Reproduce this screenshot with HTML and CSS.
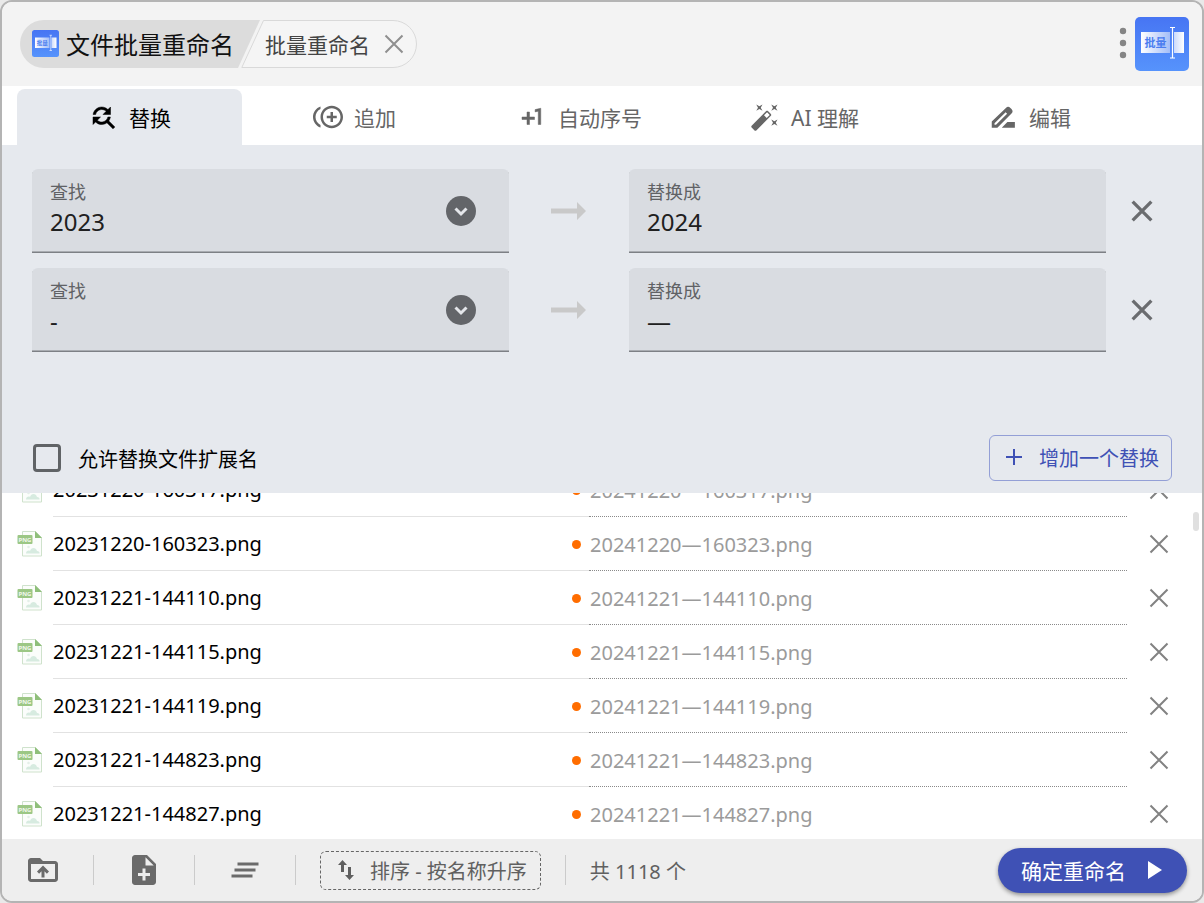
FILE: index.html
```
<!DOCTYPE html>
<html lang="zh-CN">
<head>
<meta charset="utf-8">
<title>文件批量重命名</title>
<link rel="stylesheet" href="styles.css">
</head>
<body>
<svg class="defs" aria-hidden="true">
  <defs>
    <linearGradient id="logo-bg" x1="0" y1="0" x2="0" y2="1"><stop offset="0" stop-color="#4775f3"/><stop offset="1" stop-color="#5693fc"/></linearGradient>
    <linearGradient id="logo-box" x1="0" y1="0" x2="1" y2="0"><stop offset="0" stop-color="#ffffff"/><stop offset="1" stop-color="#a3bdf8"/></linearGradient>
    <linearGradient id="logo-end" x1="0" y1="0" x2="1" y2="0"><stop offset="0" stop-color="#ccdafb"/><stop offset="1" stop-color="#ffffff"/></linearGradient>
    <symbol id="logo" viewBox="0 0 54 54">
      <rect width="54" height="54" rx="5" fill="url(#logo-bg)"/>
      <rect x="6" y="15" width="29" height="21" fill="url(#logo-box)"/>
      <rect x="39" y="15" width="10" height="21" fill="url(#logo-end)"/>
      <path d="M35 10.500h5M35 41h5M37.500 10.500V41" stroke="#fff" stroke-width="1.200" fill="none"/>
      <text x="9.500" y="30" class="logo-text">批量</text>
    </symbol>
    <symbol id="png" viewBox="0 0 26 28">
      <path d="M5.500 1.500h13l6 6v18.500h-19z" fill="#fbfdfb" stroke="#cfe2cc" stroke-width="1"/>
      <path d="M18 1l7 7h-7z" fill="#8fbf7a"/>
      <path d="M9 23.500c0-3 3-3.500 4-2.500 1-4 6-4 7 0 2 0 3 1.500 2.500 2.500z" fill="#d7ebe0"/>
      <circle cx="11.500" cy="17" r="1.300" fill="#e4f0e8"/>
      <rect x="0.500" y="5" width="15" height="9" rx="1" fill="#9cc785"/>
      <text x="1.500" y="12" class="png-text">PNG</text>
    </symbol>
    <symbol id="x" viewBox="0 0 20 20"><path d="M1.500 1.500l17 17M18.500 1.500l-17 17" stroke="currentColor" fill="none"/></symbol>
  </defs>
</svg>

<div class="window">
  <header class="header">
    <nav class="crumbs">
      <div class="crumb-app"><svg class="logo-small"><use href="#logo"/></svg><span>文件批量重命名</span></div>
      <div class="crumb-task">
        <svg class="crumb-outline" viewBox="0 0 176 48" aria-hidden="true"><path d="M22.500.5H152a23.500 23.500 0 0 1 0 47H.8z" fill="#f5f5f5" stroke="#d9d9d9"/></svg>
        <span>批量重命名</span>
        <button class="icon-button crumb-close" aria-label="关闭"><svg class="x x-thin"><use href="#x"/></svg></button>
      </div>
    </nav>
    <div class="header-end">
      <button class="icon-button kebab" aria-label="更多"><svg viewBox="0 0 8 32" width="8" height="32"><g fill="#858585"><circle cx="4" cy="4" r="3.200"/><circle cx="4" cy="16" r="3.200"/><circle cx="4" cy="28" r="3.200"/></g></svg></button>
      <svg class="logo-large"><use href="#logo"/></svg>
    </div>
  </header>

  <div class="tabs" role="tablist">
    <button class="tab active" role="tab" aria-selected="true"><svg viewBox="0 0 24 24"><path d="M11 6c1.380 0 2.630.56 3.540 1.460L12 10h6V4l-2.050 2.050C14.680 4.780 12.930 4 11 4c-3.530 0-6.430 2.610-6.920 6H6.100c.46-2.280 2.480-4 4.900-4zm5.640 9.140c.66-.9 1.120-1.970 1.280-3.140H15.900c-.46 2.280-2.480 4-4.900 4-1.380 0-2.630-.56-3.540-1.460L10 12H4v6l2.050-2.050C7.320 17.220 9.070 18 11 18c1.550 0 2.980-.51 4.140-1.360L20 21.490 21.490 20l-4.850-4.860z" stroke="currentColor" stroke-width=".4"/></svg>替换</button>
    <button class="tab" role="tab"><svg viewBox="0 0 24 24"><path d="M16 8h-2v3h-3v2h3v3h2v-3h3v-2h-3zM2 12c0-2.790 1.640-5.200 4.010-6.320V3.520C2.520 4.760 0 8.090 0 12s2.520 7.240 6.010 8.480v-2.160C3.640 17.200 2 14.790 2 12zm13-9c-4.960 0-9 4.040-9 9s4.040 9 9 9 9-4.040 9-9-4.040-9-9-9zm0 16c-3.860 0-7-3.140-7-7s3.140-7 7-7 7 3.140 7 7-3.140 7-7 7z"/></svg>追加</button>
    <button class="tab" role="tab"><svg viewBox="0 0 24 24"><path d="M10 8H8v4H4v2h4v4h2v-4h4v-2h-4zm4.500-1.920V7.900l2.500-.5V18h2V5z" stroke="currentColor" stroke-width=".4"/></svg>自动序号</button>
    <button class="tab" role="tab"><svg viewBox="0 0 24 24"><path d="M7.500 5.600L5 7l1.400-2.500L5 2l2.500 1.400L10 2 8.600 4.500 10 7zM19.500 15.400L22 14l-1.400 2.500L22 19l-2.500-1.400L17 19l1.400-2.500L17 14zM22 2l-1.400 2.500L22 7l-2.500-1.400L17 7l1.400-2.500L17 2l2.500 1.400zM13.340 12.780l2.440-2.440-2.120-2.120-2.440 2.440zM14.370 7.290l2.340 2.340c.39.37.39 1.020 0 1.410L5.040 22.710c-.39.39-1.040.39-1.410 0l-2.340-2.340c-.39-.37-.39-1.020 0-1.410L12.960 7.290c.39-.39 1.040-.39 1.410 0z"/></svg>AI 理解</button>
    <button class="tab" role="tab"><svg viewBox="0 0 24 24"><path fill-rule="evenodd" d="M3 15.500V20.500h4.500L18.800 9.200a2.600 2.600 0 0 0 0-3.600l-.9-.9a2.600 2.600 0 0 0-3.600 0zM6.400 18.200H5.200V17l8.900-8.900 1.200 1.200zM15.500 16l-4.500 4.500h10.500v-4.500z"/></svg>编辑</button>
  </div>

  <section class="panel">
    <div class="rules">
      <div class="rule">
        <div class="field"><label for="find-1">查找</label><input id="find-1" type="text" value="2023">
          <button class="icon-button history" aria-label="历史"><svg viewBox="0 0 30 30" width="30" height="30"><circle cx="15" cy="15" r="15" fill="#636569"/><path d="M9.500 12.500l5.500 5.500 5.500-5.500" fill="none" stroke="#e4e6ea" stroke-width="3"/></svg></button></div>
        <svg class="arrow" viewBox="0 0 36 18"><path d="M0 6.500h26V0l9 9-9 9v-6.500H0z"/></svg>
        <div class="field"><label for="to-1">替换成</label><input id="to-1" type="text" value="2024"></div>
        <button class="icon-button" aria-label="删除规则"><svg class="x x-bold"><use href="#x"/></svg></button>
      </div>
      <div class="rule">
        <div class="field"><label for="find-2">查找</label><input id="find-2" type="text" value="-">
          <button class="icon-button history" aria-label="历史"><svg viewBox="0 0 30 30" width="30" height="30"><circle cx="15" cy="15" r="15" fill="#636569"/><path d="M9.500 12.500l5.500 5.500 5.500-5.500" fill="none" stroke="#e4e6ea" stroke-width="3"/></svg></button></div>
        <svg class="arrow" viewBox="0 0 36 18"><path d="M0 6.500h26V0l9 9-9 9v-6.500H0z"/></svg>
        <div class="field"><label for="to-2">替换成</label><input id="to-2" type="text" value="—"></div>
        <button class="icon-button" aria-label="删除规则"><svg class="x x-bold"><use href="#x"/></svg></button>
      </div>
    </div>
    <div class="panel-actions">
      <label class="check"><input type="checkbox">允许替换文件扩展名</label>
      <button class="add"><svg viewBox="0 0 18 18" width="18" height="18"><path d="M9 1v16M1 9h16" stroke="currentColor" stroke-width="2"/></svg>增加一个替换</button>
    </div>
  </section>

  <main class="files">
    <ul class="file-list" id="file-list">
      <li class="file"><svg class="png"><use href="#png"/></svg><span class="name">20231220-160317.png</span><input class="new-name" aria-label="新文件名" value="20241220—160317.png"><button class="icon-button" aria-label="移除"><svg class="x x-mid"><use href="#x"/></svg></button></li>
      <li class="file"><svg class="png"><use href="#png"/></svg><span class="name">20231220-160323.png</span><input class="new-name" aria-label="新文件名" value="20241220—160323.png"><button class="icon-button" aria-label="移除"><svg class="x x-mid"><use href="#x"/></svg></button></li>
      <li class="file"><svg class="png"><use href="#png"/></svg><span class="name">20231221-144110.png</span><input class="new-name" aria-label="新文件名" value="20241221—144110.png"><button class="icon-button" aria-label="移除"><svg class="x x-mid"><use href="#x"/></svg></button></li>
      <li class="file"><svg class="png"><use href="#png"/></svg><span class="name">20231221-144115.png</span><input class="new-name" aria-label="新文件名" value="20241221—144115.png"><button class="icon-button" aria-label="移除"><svg class="x x-mid"><use href="#x"/></svg></button></li>
      <li class="file"><svg class="png"><use href="#png"/></svg><span class="name">20231221-144119.png</span><input class="new-name" aria-label="新文件名" value="20241221—144119.png"><button class="icon-button" aria-label="移除"><svg class="x x-mid"><use href="#x"/></svg></button></li>
      <li class="file"><svg class="png"><use href="#png"/></svg><span class="name">20231221-144823.png</span><input class="new-name" aria-label="新文件名" value="20241221—144823.png"><button class="icon-button" aria-label="移除"><svg class="x x-mid"><use href="#x"/></svg></button></li>
      <li class="file"><svg class="png"><use href="#png"/></svg><span class="name">20231221-144827.png</span><input class="new-name" aria-label="新文件名" value="20241221—144827.png"><button class="icon-button" aria-label="移除"><svg class="x x-mid"><use href="#x"/></svg></button></li>
    </ul>
    <div class="thumb"></div>
  </main>

  <footer class="footer">
    <div class="tools">
      <button class="icon-button" aria-label="添加文件夹"><svg class="tool" viewBox="0 0 24 24"><path d="M20 6h-8l-2-2H4c-1.100 0-1.990.9-1.990 2L2 18c0 1.100.9 2 2 2h16c1.100 0 2-.9 2-2V8c0-1.100-.9-2-2-2zm0 12H4V8h16zM9.410 14.420L11 12.840V17h2v-4.160l1.590 1.590L16 13.010 12.010 9 8 13.010z"/></svg></button>
      <span class="divider"></span>
      <button class="icon-button" aria-label="添加文件"><svg class="tool" viewBox="0 0 24 24"><path d="M14 2H6c-1.100 0-1.990.9-1.990 2L4 20c0 1.100.89 2 1.990 2H18c1.100 0 2-.9 2-2V8zm2 14h-3v3h-2v-3H8v-2h3v-3h2v3h3zm-3-7V3.500L18.500 9z"/></svg></button>
      <span class="divider"></span>
      <button class="icon-button" aria-label="清空"><svg class="tool" viewBox="0 0 24 24"><path d="M5 13h14v-2H5v2zm-2 4h14v-2H3v2zM7 7v2h14V7H7z"/></svg></button>
      <span class="divider"></span>
    </div>
    <button class="sort"><svg viewBox="0 0 18 22" width="18" height="22"><path d="M4 13V6H1l4.500-5L10 6H7v7zM11 8v8H8l4.500 5 4.500-5h-3V8z" fill="#5f5f5f"/></svg>排序 - 按名称升序</button>
    <span class="divider"></span>
    <span class="count">共 1118 个</span>
    <button class="confirm">确定重命名<svg viewBox="0 0 14 18" width="14" height="18"><path d="M0 0l14 9-14 9z" fill="#fff"/></svg></button>
  </footer>
</div>
<script src="main.js"></script>
</body>
</html>
```

FILE: styles.css
```
* { box-sizing: border-box; }

body {
  margin: 0;
  background: #e9e9e9;
  color: #111;
  font-family: "Noto Sans", "Noto Sans CJK SC", sans-serif;
  font-size: 20px;
  font-weight: 400;
}

button, input { font: inherit; color: inherit; }
button { padding: 0; border: 0; background: none; cursor: pointer; white-space: nowrap; }
svg { display: block; flex: none; }

.defs { position: absolute; width: 0; height: 0; }

.window {
  display: flex;
  flex-direction: column;
  height: 100vh;
  border: 2px solid #b4b4b4;
  border-radius: 12px;
  background: #fff;
  overflow: hidden;
}

.icon-button { display: flex; align-items: center; justify-content: center; color: #6a6c6f; }
.x { width: 20px; height: 20px; stroke-width: 2px; }
.x-thin { color: #8f8f8f; }
.x-mid { color: #828282; }
.x-bold { width: 22px; height: 22px; stroke-width: 3px; }

/* Header */
.header {
  display: flex;
  align-items: center;
  justify-content: space-between;
  height: 84px;
  flex: none;
  padding: 0 13px 0 18px;
  background: #f3f3f3;
}
.crumbs { display: flex; }
.crumb-app {
  display: flex;
  align-items: center;
  gap: 7px;
  height: 48px;
  padding: 0 26px 2px 12px;
  border-radius: 24px 0 0 24px;
  background: #dcdcdc;
  clip-path: polygon(0 0, 100% 0, calc(100% - 22px) 100%, 0 100%);
  font-size: 24px;
}
.logo-small { width: 27px; height: 27px; }
.crumb-task {
  position: relative;
  display: flex;
  align-items: center;
  gap: 14px;
  width: 176px;
  height: 48px;
  margin-left: -19px;
  padding: 0 0 1px 24px;
  color: #444;
  font-size: 21px;
}
.crumb-task span, .crumb-close { position: relative; }
.crumb-outline { position: absolute; left: 0; top: 0; width: 176px; height: 48px; }
.header-end { display: flex; align-items: center; gap: 8px; }
.kebab { padding-bottom: 2px; }
.logo-large { width: 54px; height: 54px; }
.logo-text { font-size: 11px; font-weight: 700; fill: #4a7df0; }
.png-text { font-size: 6px; font-weight: 700; fill: #f2f8ef; }

/* Tabs */
.tabs { display: flex; flex: none; padding: 3px 60px 0 15px; background: #fff; }
.tab {
  display: flex;
  flex: 1 1 0;
  align-items: center;
  justify-content: center;
  gap: 11px;
  height: 56px;
  border-radius: 8px 8px 0 0;
  color: #666;
  font-size: 21px;
}
.tab svg { width: 30px; height: 30px; fill: currentColor; }
.tab.active { background: #e6e9ee; color: #000; }

/* Replace rules */
.panel { flex: none; padding: 24px 0 12px 30px; background: #e6e9ee; }
.rules { display: grid; align-content: start; gap: 15px; min-height: 266px; }
.rule { display: grid; grid-template-columns: 1fr 120px 1fr 72px; padding-right: 24px; }
.field {
  position: relative;
  display: flex;
  flex-direction: column;
  height: 84px;
  padding: 12px 18px 0;
  border-radius: 6px 6px 0 0;
  background: #d9dce1;
  box-shadow: inset 0 -1px #7d8085, inset 0 -2px #a9acb1;
}
.field label { color: #606265; font-size: 18px; line-height: 22px; }
.field input {
  width: 100%;
  height: 32px;
  margin-top: 3px;
  padding: 0;
  border: 0;
  outline: 0;
  background: none;
  color: #202020;
  font-size: 24px;
  line-height: 32px;
}
.history { position: absolute; right: 33px; top: 27px; }
.arrow { place-self: center; width: 36px; height: 18px; fill: #c9c9c9; }
.panel-actions { display: flex; align-items: center; justify-content: space-between; padding-right: 30px; }
.check { display: flex; align-items: center; gap: 17px; color: #000; }
.check input {
  appearance: none;
  width: 28px;
  height: 28px;
  margin: 0 0 0 1px;
  border: 3px solid #606366;
  border-radius: 4px;
}
.add {
  display: flex;
  align-items: center;
  gap: 16px;
  height: 46px;
  padding: 0 12px 2px 15px;
  border: 1px solid #939fd6;
  border-radius: 6px;
  color: #3f51b5;
}

/* Files */
.files { position: relative; flex: 1 1 0; min-height: 0; }
.file-list {
  height: 100%;
  margin: 0;
  padding: 0;
  overflow-y: auto;
  scrollbar-width: none;
  list-style: none;
}
.file { display: flex; align-items: center; height: 54px; padding-left: 15px; }
.png { width: 26px; height: 28px; margin-right: 10px; }
.name {
  position: relative;
  flex: 1 1 0;
  height: 54px;
  border-bottom: 1px solid #e2e2e2;
  color: #000;
  line-height: 54px;
}
.name::after {
  content: "";
  position: absolute;
  right: 8px;
  top: 23px;
  width: 9px;
  height: 9px;
  border-radius: 50%;
  background: #ff6d00;
}
.new-name {
  flex: 1 1 0;
  min-width: 0;
  height: 54px;
  padding: 2px 1px 0;
  border: 0;
  border-bottom: 1px dotted #8a8a8a;
  outline: 0;
  background: none;
  color: #9b9b9b;
}
.file .icon-button { width: 64px; height: 54px; margin-right: 11px; }
.thumb {
  position: absolute;
  right: 3px;
  top: 19px;
  width: 6px;
  height: 19px;
  border-radius: 3px;
  background: #e0e0e0;
}

/* Footer */
.footer {
  display: flex;
  flex: none;
  align-items: center;
  gap: 24px;
  height: 62px;
  padding: 0 15px 0 23px;
  background: #eee;
  color: #606060;
}
.tools { display: flex; align-items: center; gap: 32px; }
.tool { width: 36px; height: 36px; fill: #6a6a6a; }
.divider { width: 1px; height: 30px; background: #cbcbcb; }
.sort {
  display: flex;
  align-items: center;
  gap: 15px;
  height: 39px;
  padding: 0 13px 0 16px;
  border: 1px dashed #666;
  border-radius: 6px;
}
.confirm {
  display: flex;
  align-items: center;
  gap: 22px;
  height: 45px;
  margin-left: auto;
  padding: 0 25px 0 23px;
  border-radius: 23px;
  background: #3f51b5;
  box-shadow: 0 2px 4px #0006;
  color: #fff;
  font-size: 21px;
}
```

FILE: main.js
```
document.getElementById("file-list").scrollTop = 30;
```
